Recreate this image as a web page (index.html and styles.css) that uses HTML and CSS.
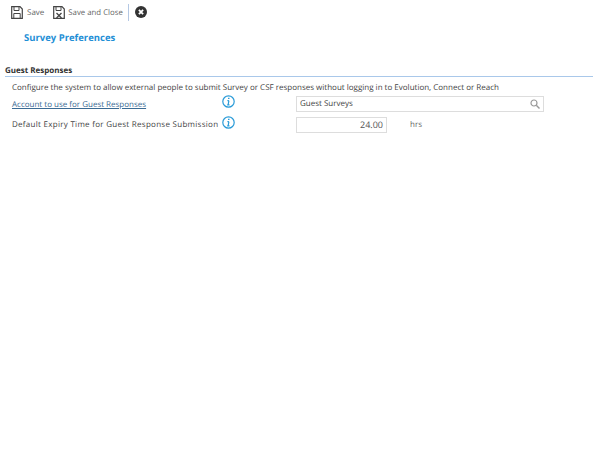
FILE: index.html
```html
<!DOCTYPE html>
<html lang="en">
<head>
<meta charset="utf-8">
<title>Survey Preferences</title>
<link rel="stylesheet" href="styles.css">
</head>
<body>
<div class="toolbar">
  <span class="tool">
    <svg class="ico" width="12" height="13" viewBox="0 0 12 13"><path d="M.7.700h8.300l2.300 2.300v9.300H.7z" fill="#fff" stroke="#444" stroke-width="1.200"/><path d="M3 1v3.500h5V1M2.800 12V7.500h6.400V12" fill="none" stroke="#444" stroke-width="1"/></svg>
    <span>Save</span>
  </span>
  <span class="tool">
    <svg class="ico" width="12" height="13" viewBox="0 0 12 13"><path d="M.7.700h8.300l2.300 2.300v9.300H.7z" fill="#fff" stroke="#444" stroke-width="1.200"/><path d="M3 1v3.500h5V1" fill="none" stroke="#444" stroke-width="1"/><path d="M3.500 7l5 5M8.500 7l-5 5" stroke="#444" stroke-width="1.300"/></svg>
    <span class="narrow">Save and Close</span>
  </span>
  <span class="sep"></span>
  <svg class="close" width="12" height="12" viewBox="0 0 12 12"><circle cx="6" cy="6" r="6" fill="#333"/><path d="M3.900 3.900l4.200 4.200M8.100 3.900l-4.200 4.200" stroke="#fff" stroke-width="1.800"/></svg>
</div>
<h1 class="title">Survey Preferences</h1>
<section class="panel">
  <h2 class="heading">Guest Responses</h2>
  <p class="intro">Configure the system to allow external people to submit Survey or CSF responses without logging in to Evolution, Connect or Reach</p>
  <div class="row">
    <a class="label link" href="#">Account to use for Guest Responses</a>
    <svg class="info" width="13" height="13" viewBox="0 0 13 13"><circle cx="6.500" cy="6.500" r="5.700" fill="#fff" stroke="#2a9bd8" stroke-width="1.200"/><path d="M6 3.300h1.500M6.900 5.600l-.8 4.200M5.400 5.700h1.500M5.200 9.900h2.300" stroke="#2a9bd8" stroke-width="1.200" fill="none"/></svg>
    <div class="field wide"><span>Guest Surveys</span>
      <svg width="10" height="10" viewBox="0 0 10 10"><circle cx="4" cy="4" r="3" fill="none" stroke="#999" stroke-width="1.200"/><path d="M6.300 6.300L9.500 9.500" stroke="#999" stroke-width="1.400"/></svg>
    </div>
  </div>
  <div class="row">
    <span class="label wider">Default Expiry Time for Guest Response Submission</span>
    <svg class="info" width="13" height="13" viewBox="0 0 13 13"><circle cx="6.500" cy="6.500" r="5.700" fill="#fff" stroke="#2a9bd8" stroke-width="1.200"/><path d="M6 3.300h1.500M6.900 5.600l-.8 4.200M5.400 5.700h1.500M5.200 9.900h2.300" stroke="#2a9bd8" stroke-width="1.200" fill="none"/></svg>
    <div class="field short">24.00</div>
    <span class="unit">hrs</span>
  </div>
</section>
</body>
</html>
```
FILE: styles.css
```css
html, body { margin: 0; padding: 0; background: #fff; }
body { width: 600px; height: 458px; overflow: hidden; font-family: "Open Sans", sans-serif; font-size: 8px; color: #444; text-rendering: geometricPrecision; }
.toolbar { display: flex; align-items: center; height: 24px; padding-left: 11px; }
.tool { display: flex; align-items: center; gap: 4px; margin-right: 9px; color: #666; font-size: 8px; }
.narrow { font-size: 7.800px; margin-left: -1px; padding-top: 2px; }
.ico { display: block; }
.sep { width: 1px; height: 17px; background: #b4c8e4; margin-right: 6px; margin-left: -4px; }
.close { display: block; }
.title { margin: 7px 0 0 24px; font-size: 9.500px; line-height: 14px; font-weight: 700; color: #1f8fd6; }
.panel { margin: 19px 7px 0 5px; }
.heading { margin: 0; padding-top: 2px; font-size: 8px; line-height: 10px; font-weight: 700; color: #333; border-bottom: 1px solid #a9c8ea; }
.intro { margin: 5px 0 -1px 7px; line-height: 12px; }
.row { display: flex; align-items: center; height: 21px; margin-left: 7px; }
.label { width: 210px; }
.wider { letter-spacing: 0.280px; }
.link { color: #3b6b94; text-decoration: underline; padding-top: 2px; }
.info { margin-right: 61px; margin-top: -4px; }
.field { box-sizing: border-box; height: 16px; border: 1px solid #ddd; display: flex; align-items: center; padding: 0 3px; }
.wide { width: 248px; justify-content: space-between; }
.short { width: 91px; justify-content: flex-end; font-size: 9px; color: #555; }
.unit { margin-left: 23px; color: #666; padding-bottom: 1px; }
```
